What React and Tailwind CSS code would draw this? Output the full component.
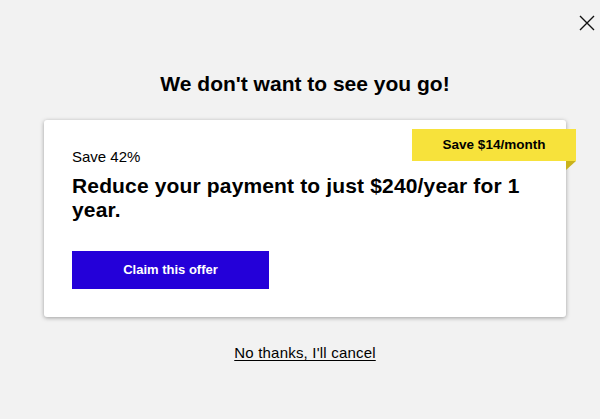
import React from "react";

export default function App() {
  return (
    <div className="relative w-[600px] h-[419px] bg-[#f2f2f2] font-['Liberation_Sans',Arial,sans-serif] text-black overflow-hidden">
      {/* close */}
      <button className="absolute right-[5px] top-[15px] w-[16px] h-[16px]">
        <svg viewBox="0 0 16 16" width="16" height="16" fill="none" stroke="#111" strokeWidth="1.4">
          <path d="M1 1L15 15M15 1L1 15" />
        </svg>
      </button>

      <div className="flex flex-col items-center pt-[71px]">
        <h1 className="text-[21px] font-bold leading-[26px] pl-[10px]">We don't want to see you go!</h1>

        <div className="relative mt-[23px] ml-[10px] w-[522px] h-[197px] bg-white rounded-[3px] shadow-[0_1px_4px_rgba(0,0,0,0.35)] pl-[28px] pt-[28px]">
          {/* badge */}
          <div className="absolute right-[-10px] top-[9px]">
            <div className="w-[164px] h-[32px] bg-[#f7e23b] flex items-center justify-center text-[13.5px] font-bold">
              Save $14/month
            </div>
            <div className="absolute right-0 top-[32px] w-0 h-0 border-t-[9px] border-t-[#c9b21c] border-r-[10px] border-r-transparent" />
          </div>

          <p className="text-[15px] leading-[18px]">Save 42%</p>
          <p className="mt-[8px] text-[21px] font-bold leading-[24px] tracking-[0.15px] w-[470px]">
            Reduce your payment to just $240/year for 1 year.
          </p>
          <button className="mt-[29px] w-[197px] h-[38px] bg-[#2400d9] text-white text-[13px] font-bold">
            Claim this offer
          </button>
        </div>

        <a href="#" className="mt-[27px] ml-[10px] text-[15px] leading-[18px] tracking-[0.2px] underline underline-offset-2">
          No thanks, I'll cancel
        </a>
      </div>
    </div>
  );
}
